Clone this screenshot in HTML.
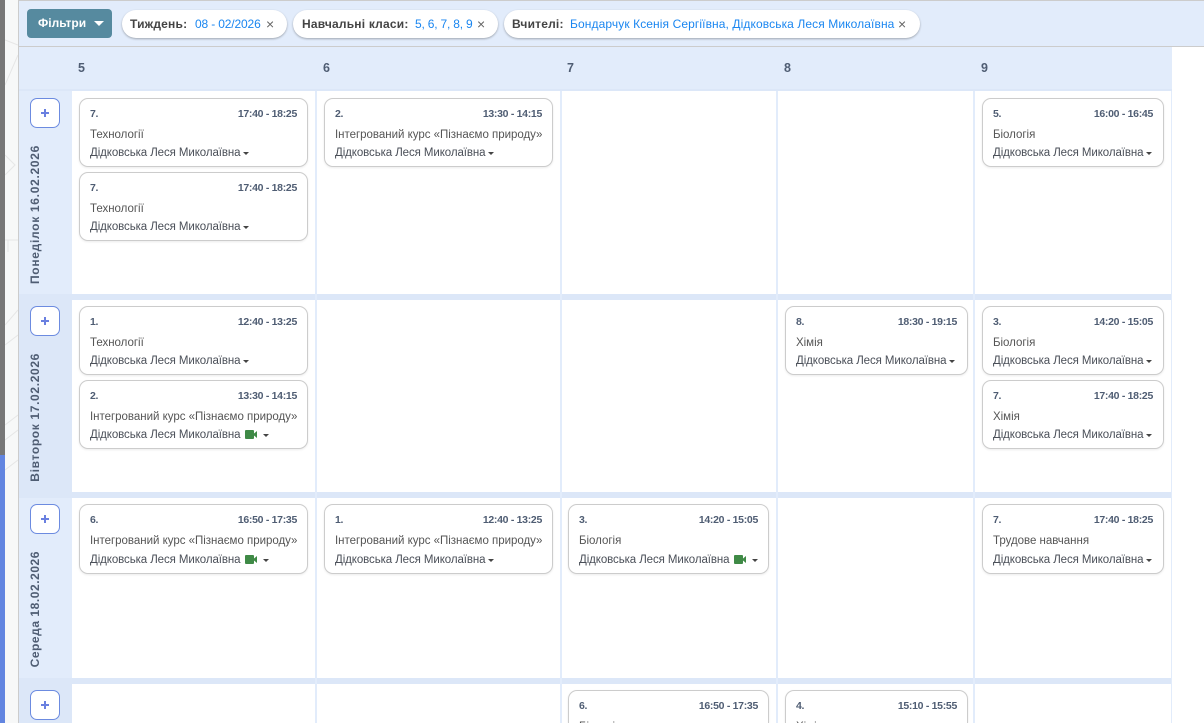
<!DOCTYPE html>
<html lang="uk"><head><meta charset="utf-8"><title>Розклад</title>
<style>
html,body{margin:0;padding:0;width:1204px;height:723px;overflow:hidden;background:#fff}
body{position:relative;font-family:"Liberation Sans",sans-serif;font-size:12px;color:#4a4a4a}
div,span{position:absolute;box-sizing:border-box;white-space:nowrap}
#w{left:0;top:0;width:1204px;height:723px;overflow:hidden}
.r{background:#dce7f8}.l{background:#e2ecfb}
.c{background:#fff;border:1px solid #ccc;border-radius:9px;box-shadow:0 1px 2px rgba(0,0,0,.08)}
.n,.t{font-weight:bold;font-size:10.5px;letter-spacing:-.3px;color:#4f5d73;top:8px;line-height:14px}
.n{left:10px}.t{right:10px}
.s{left:10px;top:29px;line-height:14px;color:#555;font-size:11.5px;letter-spacing:-.02px}
.d{left:10px;top:47px;line-height:14px;color:#4a4f58;font-size:11.5px;letter-spacing:-.09px}
.d i{display:inline-block;width:0;height:0;border:3px solid transparent;border-top-color:#444;border-bottom:0;margin-left:3px;vertical-align:1px}
.d svg{display:inline-block;width:12px;height:9px;margin:0 3px 0 5px;vertical-align:-1px}
.h{top:61px;font-weight:bold;font-size:12.5px;line-height:14px;color:#4f5d73}
.p{left:30px;width:30px;height:30px;background:#fff;border:1px solid #6c8be0;border-radius:7px}
.p:before{content:"";position:absolute;left:10px;top:13px;width:8px;height:2px;background:#6a80e0}
.p:after{content:"";position:absolute;left:13px;top:10px;width:2px;height:8px;background:#6a80e0}
.v{left:27.5px;writing-mode:vertical-rl;transform:rotate(180deg);font-weight:bold;font-size:12px;letter-spacing:.7px;color:#4f5d73;line-height:14px}
.f{height:28px;top:10px;background:#fff;border-radius:14px;box-shadow:0 1px 2px rgba(0,0,0,.3);line-height:28px;font-size:12px}
.f u{position:absolute;text-decoration:none;font-weight:bold;color:#444;letter-spacing:.2px}
.f em{position:absolute;font-style:normal;color:#1a86f0}
.f s{position:absolute;text-decoration:none;color:#666;font-size:14px}
.vl{top:91px;height:632px;width:2px;background:#e2ecfb}
</style></head><body><div id="w">
<div style="left:0;top:0;width:5px;height:455px;background:#777"></div>
<div style="left:0;top:455px;width:5px;height:268px;background:#6285e0"></div>
<div style="left:5px;top:0;width:13px;height:723px;background:#f7f8f8"></div>
<svg style="position:absolute;left:5px;top:0" width="13" height="723" fill="none" stroke="#e6e6e6"><path d="M0 40L13 45M0 85L13 55M0 155L10 165L0 175M0 240H13M3 240V252M0 325L13 310M0 345L13 335M0 425L13 415M0 440L13 430M0 470L13 460"/></svg>
<div style="left:18px;top:0;width:1px;height:723px;background:#ccc"></div>

<div class="l" style="left:19px;top:0;width:1185px;height:47px;border-top:1px solid #ccc;border-bottom:1px solid #ccc"></div>
<div style="left:27px;top:9px;width:85px;height:29px;background:#568a9f;border-radius:4px;color:#fff;font-weight:bold;line-height:28px;padding-left:11px">Фільтри<i style="position:absolute;left:67px;top:12px;width:0;height:0;border:5px solid transparent;border-top-color:#fff;border-bottom:0"></i></div>
<div class="f" style="left:122px;width:165px"><u style="left:8px">Тиждень:</u><em style="left:73px;letter-spacing:-.15px">08 - 02/2026</em><s style="left:144px">×</s></div>
<div class="f" style="left:293px;width:205px"><u style="left:9px">Навчальні класи:</u><em style="left:122px;letter-spacing:-.2px">5, 6, 7, 8, 9</em><s style="left:184px">×</s></div>
<div class="f" style="left:504px;width:416px"><u style="left:8px">Вчителі:</u><em style="left:66px;letter-spacing:.1px">Бондарчук Ксенія Сергіївна, Дідковська Леся Миколаївна</em><s style="left:394px">×</s></div>

<div class="l" style="left:19px;top:47px;width:1153px;height:42px"></div>
<div class="r" style="left:19px;top:89px;width:1153px;height:2px"></div>
<span class="h" style="left:78px">5</span><span class="h" style="left:323px">6</span><span class="h" style="left:567px">7</span><span class="h" style="left:784px">8</span><span class="h" style="left:981px">9</span>

<div class="l" style="left:19px;top:91px;width:53px;height:203px"></div>
<div class="r" style="left:19px;top:294px;width:1153px;height:6px"></div>
<div class="r" style="left:19px;top:300px;width:53px;height:192px"></div>
<div class="r" style="left:19px;top:492px;width:1153px;height:6px"></div>
<div class="l" style="left:19px;top:498px;width:53px;height:180px"></div>
<div class="r" style="left:19px;top:678px;width:1153px;height:6px"></div>
<div class="r" style="left:19px;top:684px;width:53px;height:39px"></div>
<div class="vl" style="left:315px"></div><div class="vl" style="left:560px"></div><div class="vl" style="left:776px"></div><div class="vl" style="left:973px"></div><div class="vl" style="left:1171px;width:1px"></div>

<div class="p" style="top:98px"></div><div class="p" style="top:306px"></div><div class="p" style="top:504px"></div><div class="p" style="top:690px"></div>
<div class="v" style="top:145px">Понеділок 16.02.2026</div>
<div class="v" style="top:353px;letter-spacing:.65px">Вівторок 17.02.2026</div>
<div class="v" style="top:551px;letter-spacing:.55px">Середа 18.02.2026</div>

<div class="c" style="left:79px;top:98px;width:229px;height:69px"><span class="n">7.</span><span class="t">17:40 - 18:25</span><span class="s">Технології</span><span class="d">Дідковська Леся Миколаївна<i></i></span></div>
<div class="c" style="left:79px;top:172px;width:229px;height:69px"><span class="n">7.</span><span class="t">17:40 - 18:25</span><span class="s">Технології</span><span class="d">Дідковська Леся Миколаївна<i></i></span></div>
<div class="c" style="left:324px;top:98px;width:229px;height:69px"><span class="n">2.</span><span class="t">13:30 - 14:15</span><span class="s">Інтегрований курс «Пізнаємо природу»</span><span class="d">Дідковська Леся Миколаївна<i></i></span></div>
<div class="c" style="left:982px;top:98px;width:182px;height:69px"><span class="n">5.</span><span class="t">16:00 - 16:45</span><span class="s">Біологія</span><span class="d">Дідковська Леся Миколаївна<i></i></span></div>

<div class="c" style="left:79px;top:306px;width:229px;height:69px"><span class="n">1.</span><span class="t">12:40 - 13:25</span><span class="s">Технології</span><span class="d">Дідковська Леся Миколаївна<i></i></span></div>
<div class="c" style="left:79px;top:380px;width:229px;height:69px"><span class="n">2.</span><span class="t">13:30 - 14:15</span><span class="s">Інтегрований курс «Пізнаємо природу»</span><span class="d">Дідковська Леся Миколаївна<svg viewBox="0 0 12 9"><path fill="#3f8a46" d="M1 0H8a1 1 0 0 1 1 1V8a1 1 0 0 1-1 1H1a1 1 0 0 1-1-1V1a1 1 0 0 1 1-1ZM9 3.5L12 1V8L9 5.5Z"/></svg><i></i></span></div>
<div class="c" style="left:785px;top:306px;width:183px;height:69px"><span class="n">8.</span><span class="t">18:30 - 19:15</span><span class="s">Хімія</span><span class="d">Дідковська Леся Миколаївна<i></i></span></div>
<div class="c" style="left:982px;top:306px;width:182px;height:69px"><span class="n">3.</span><span class="t">14:20 - 15:05</span><span class="s">Біологія</span><span class="d">Дідковська Леся Миколаївна<i></i></span></div>
<div class="c" style="left:982px;top:380px;width:182px;height:69px"><span class="n">7.</span><span class="t">17:40 - 18:25</span><span class="s">Хімія</span><span class="d">Дідковська Леся Миколаївна<i></i></span></div>

<div class="c" style="left:79px;top:504px;width:229px;height:70px"><span class="n">6.</span><span class="t">16:50 - 17:35</span><span class="s">Інтегрований курс «Пізнаємо природу»</span><span class="d" style="top:48px">Дідковська Леся Миколаївна<svg viewBox="0 0 12 9"><path fill="#3f8a46" d="M1 0H8a1 1 0 0 1 1 1V8a1 1 0 0 1-1 1H1a1 1 0 0 1-1-1V1a1 1 0 0 1 1-1ZM9 3.5L12 1V8L9 5.5Z"/></svg><i></i></span></div>
<div class="c" style="left:324px;top:504px;width:229px;height:70px"><span class="n">1.</span><span class="t">12:40 - 13:25</span><span class="s">Інтегрований курс «Пізнаємо природу»</span><span class="d" style="top:48px">Дідковська Леся Миколаївна<i></i></span></div>
<div class="c" style="left:568px;top:504px;width:201px;height:70px"><span class="n">3.</span><span class="t">14:20 - 15:05</span><span class="s">Біологія</span><span class="d" style="top:48px">Дідковська Леся Миколаївна<svg viewBox="0 0 12 9"><path fill="#3f8a46" d="M1 0H8a1 1 0 0 1 1 1V8a1 1 0 0 1-1 1H1a1 1 0 0 1-1-1V1a1 1 0 0 1 1-1ZM9 3.5L12 1V8L9 5.5Z"/></svg><i></i></span></div>
<div class="c" style="left:982px;top:504px;width:182px;height:70px"><span class="n">7.</span><span class="t">17:40 - 18:25</span><span class="s">Трудове навчання</span><span class="d" style="top:48px">Дідковська Леся Миколаївна<i></i></span></div>

<div class="c" style="left:568px;top:690px;width:201px;height:33px;border-bottom:0;border-radius:9px 9px 0 0"><span class="n">6.</span><span class="t">16:50 - 17:35</span><span class="s">Біологія</span></div>
<div class="c" style="left:785px;top:690px;width:183px;height:33px;border-bottom:0;border-radius:9px 9px 0 0"><span class="n">4.</span><span class="t">15:10 - 15:55</span><span class="s">Хімія</span></div>
</div></body></html>
